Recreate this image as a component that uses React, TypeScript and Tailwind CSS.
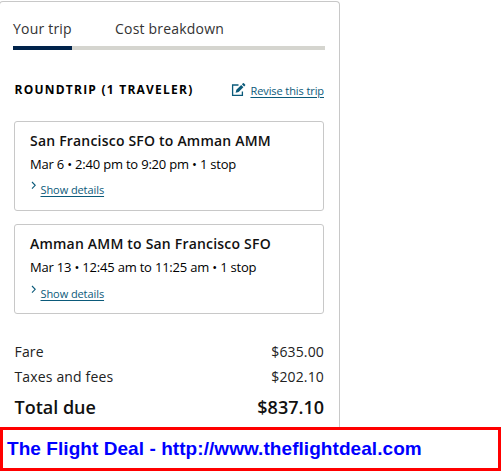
const EditIcon = () => (
  <svg width="15" height="14" viewBox="0 0 15 14" fill="none" className="shrink-0">
    <path d="M7.5 2H1.6v10.4h9.8V8.6" stroke="#0b5a7a" strokeWidth="1.3" />
    <path d="M4.6 9.8l.8-3 4.8-4.8 2.2 2.2-4.8 4.8z" fill="#0b5a7a" />
    <path d="M10.9 1.3l1-1a.7.7 0 0 1 1 0l1.2 1.2a.7.7 0 0 1 0 1l-1 1z" fill="#0b5a7a" />
  </svg>
);

type TripProps = { title: string; time: string; linkClass: string };

const Trip = ({ title, time, linkClass }: TripProps) => (
  <section className="h-[90px] w-[310px] rounded-[3px] border border-[#c8c8c8] pl-[15px]">
    <h3 className="mt-[9px] text-[14px] leading-5 font-semibold tracking-[0.2px] text-[#111]">{title}</h3>
    <p className="mt-[3px] text-[13px] leading-5 tracking-[-0.2px]">{time}</p>
    <div className={`flex items-start text-[#0b5a7a] ${linkClass}`}>
      <svg width="7" height="9" viewBox="0 0 7 9" fill="none" className="mr-1 shrink-0">
        <path d="M2 1l3.2 3.3L2 7.6" stroke="#0b5a7a" strokeWidth="1.1" />
      </svg>
      <a className="-ml-[0.5px] mt-px text-[11px] leading-4 tracking-[-0.08px] underline underline-offset-2">Show details</a>
    </div>
  </section>
);

export default function App() {
  return (
    <main className="flex h-[471px] w-[501px] flex-col overflow-hidden bg-white font-['Open_Sans',sans-serif] text-black whitespace-nowrap">
      <div className="mt-px -ml-px h-[426px] w-[341px] rounded-t-[4px] border border-b-0 border-[#c8c8c8] pl-[13px]">
        <nav className="flex h-[48px] w-[312px] text-[14px] leading-5 text-[#333]">
          <div className="h-[48px] w-[59px] border-b-4 border-[#00234b] pt-[17px] tracking-[0.2px]">Your trip</div>
          <div className="h-[48px] flex-1 border-b-4 border-[#d5d5cf] pt-[17px] pl-[43px] tracking-[0.2px]">Cost breakdown</div>
        </nav>
        <div className="ml-px w-[310px]">
          <header className="flex h-[71px] items-start justify-between pt-[29px]">
            <h2 className="mt-px pl-[0.5px] text-[12px] leading-5 font-bold tracking-[1.23px]">ROUNDTRIP (1 TRAVELER)</h2>
            <div className="mt-[4px] flex items-start gap-1 text-[#0b5a7a]">
              <EditIcon />
              <a className="text-[11px] leading-4 tracking-[-0.09px] underline underline-offset-2">Revise this trip</a>
            </div>
          </header>
          <div className="flex flex-col gap-[13px]">
            <Trip title="San Francisco SFO to Amman AMM" time="Mar 6 • 2:40 pm to 9:20 pm • 1 stop" linkClass="mt-[7px]" />
            <Trip title="Amman AMM to San Francisco SFO" time="Mar 13 • 12:45 am to 11:25 am • 1 stop" linkClass="mt-[8px]" />
          </div>
          <dl className="mt-[28px] text-[14px] text-[#222]">
            <div className="flex h-[25px] justify-between leading-5 tracking-[0.15px]"><dt className="pl-[0.5px]">Fare</dt><dd>$635.00</dd></div>
            <div className="flex h-[25px] justify-between leading-5 tracking-[0.15px]"><dt className="pl-[0.5px]">Taxes and fees</dt><dd>$202.10</dd></div>
            <div className="mt-[3px] flex justify-between text-[18px] leading-6 font-semibold text-[#111]"><dt className="pl-[0.5px]">Total due</dt><dd>$837.10</dd></div>
          </dl>
        </div>
      </div>
      <footer className="h-[44px] w-[501px] border-[3px] border-[#f00] bg-white pt-[7px] pl-[4px] font-['Liberation_Sans',Arial,sans-serif] text-[19px] leading-6 font-bold tracking-[0.06px] text-[#00f]">
        The Flight Deal - http://www.theflightdeal.com
      </footer>
    </main>
  );
}
